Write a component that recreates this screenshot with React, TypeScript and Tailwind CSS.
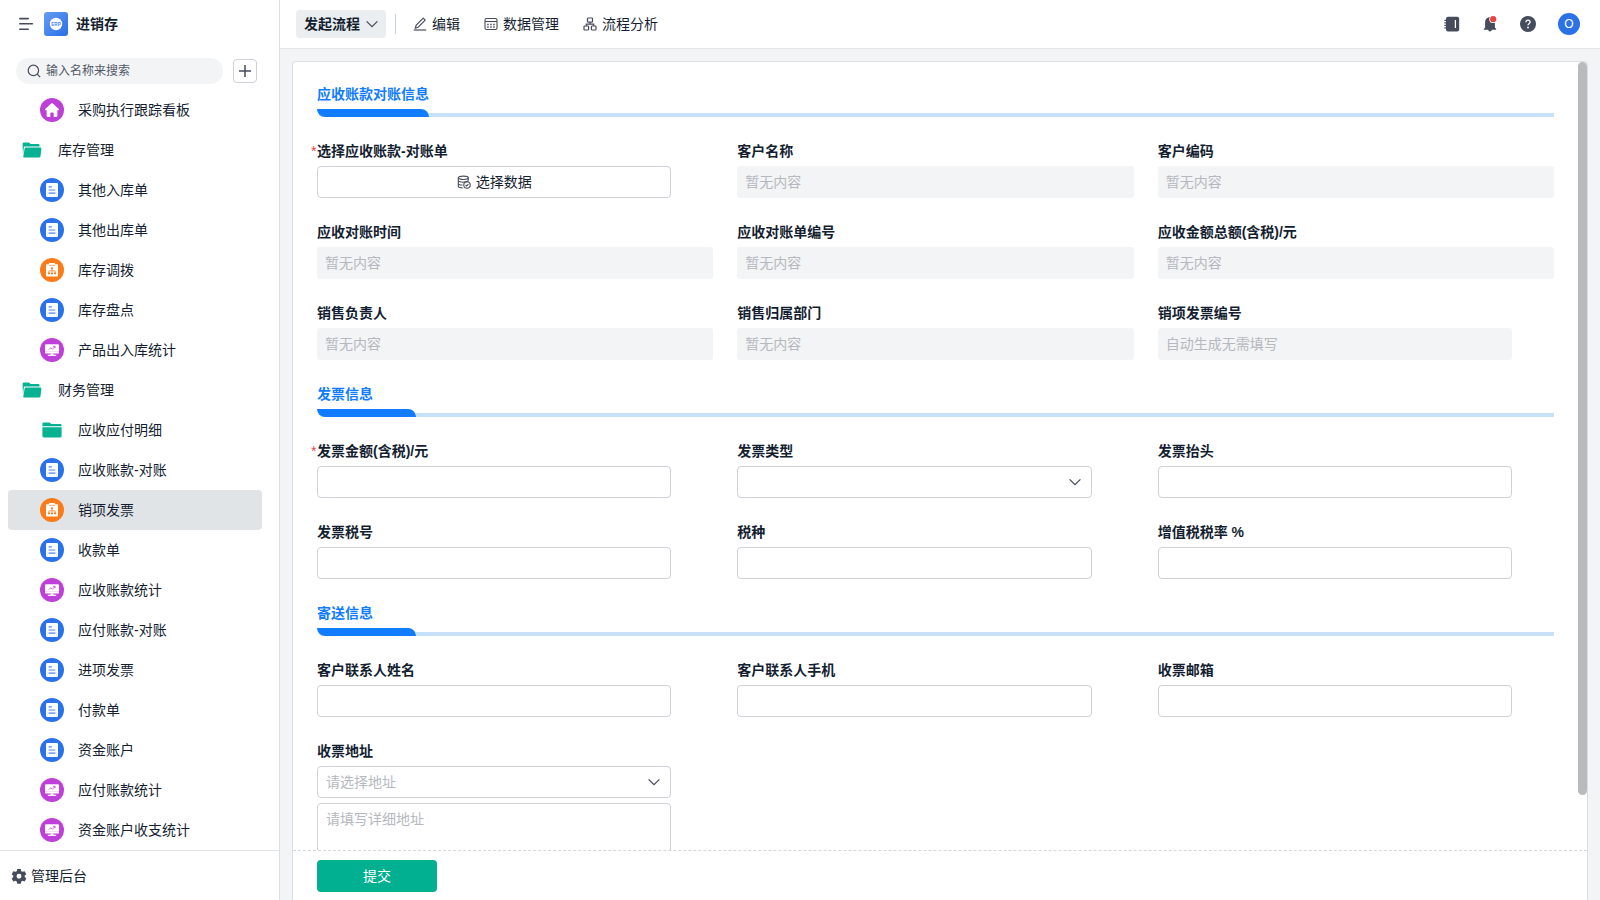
import { FormEvent, ReactNode, useState } from 'react';
import clsx from 'clsx';

type IconKind = 'home' | 'form' | 'flow' | 'chart' | 'folder' | 'folderOpen';

interface IMenuItem {
  name: string;
  icon: IconKind;
  group?: boolean;
}

interface IField {
  id: string;
  label: string;
  kind: 'pick' | 'readonly' | 'auto' | 'text' | 'select' | 'address';
  required?: boolean;
}

interface ISection {
  title: string;
  fields: IField[];
}

const menu: IMenuItem[] = [
  { name: '采购执行跟踪看板', icon: 'home' },
  { name: '库存管理', icon: 'folderOpen', group: true },
  { name: '其他入库单', icon: 'form' },
  { name: '其他出库单', icon: 'form' },
  { name: '库存调拨', icon: 'flow' },
  { name: '库存盘点', icon: 'form' },
  { name: '产品出入库统计', icon: 'chart' },
  { name: '财务管理', icon: 'folderOpen', group: true },
  { name: '应收应付明细', icon: 'folder' },
  { name: '应收账款-对账', icon: 'form' },
  { name: '销项发票', icon: 'flow' },
  { name: '收款单', icon: 'form' },
  { name: '应收账款统计', icon: 'chart' },
  { name: '应付账款-对账', icon: 'form' },
  { name: '进项发票', icon: 'form' },
  { name: '付款单', icon: 'form' },
  { name: '资金账户', icon: 'form' },
  { name: '应付账款统计', icon: 'chart' },
  { name: '资金账户收支统计', icon: 'chart' },
];

const sections: ISection[] = [
  {
    title: '应收账款对账信息',
    fields: [
      { id: 'statement', label: '选择应收账款-对账单', kind: 'pick', required: true },
      { id: 'customer', label: '客户名称', kind: 'readonly' },
      { id: 'customerCode', label: '客户编码', kind: 'readonly' },
      { id: 'statementDate', label: '应收对账时间', kind: 'readonly' },
      { id: 'statementNo', label: '应收对账单编号', kind: 'readonly' },
      { id: 'total', label: '应收金额总额(含税)/元', kind: 'readonly' },
      { id: 'owner', label: '销售负责人', kind: 'readonly' },
      { id: 'department', label: '销售归属部门', kind: 'readonly' },
      { id: 'invoiceNo', label: '销项发票编号', kind: 'auto' },
    ],
  },
  {
    title: '发票信息',
    fields: [
      { id: 'amount', label: '发票金额(含税)/元', kind: 'text', required: true },
      { id: 'type', label: '发票类型', kind: 'select' },
      { id: 'header', label: '发票抬头', kind: 'text' },
      { id: 'taxNo', label: '发票税号', kind: 'text' },
      { id: 'taxKind', label: '税种', kind: 'text' },
      { id: 'rate', label: '增值税税率 %', kind: 'text' },
    ],
  },
  {
    title: '寄送信息',
    fields: [
      { id: 'contact', label: '客户联系人姓名', kind: 'text' },
      { id: 'phone', label: '客户联系人手机', kind: 'text' },
      { id: 'email', label: '收票邮箱', kind: 'text' },
      { id: 'address', label: '收票地址', kind: 'address' },
    ],
  },
];

function Circle({ color, children }: { color: string; children: ReactNode }) {
  return (
    <svg viewBox="0 0 24 24" className="size-6">
      <circle cx="12" cy="12" r="12" fill={color} />
      {children}
    </svg>
  );
}

function MenuIcon({ icon }: { icon: IconKind }) {
  switch (icon) {
    case 'home':
      return (
        <Circle color="#bf3fd9">
          <path
            fill="#fff"
            d="M12 5.2c.3 0 .6.1.8.3l6 5.6c.5.5.2 1.2-.5 1.2h-.9v5.5c0 .7-.5 1.2-1.2 1.2h-2.5v-3.6c0-.5-.3-.8-.8-.8h-1.8c-.5 0-.8.3-.8.8V19H7.8c-.7 0-1.2-.5-1.2-1.2v-5.5h-.9c-.7 0-1-.7-.5-1.2l6-5.6c.2-.2.5-.3.8-.3z"
          />
        </Circle>
      );
    case 'form':
      return (
        <Circle color="#2b71e8">
          <rect x="6" y="5" width="12" height="14" rx="1.2" fill="#fff" />
          <path
            d="M8.6 8.8h3.2M8.6 12h6.8M8.6 15.2h6.8"
            stroke="#4a86ec"
            strokeWidth="1.2"
          />
        </Circle>
      );
    case 'flow':
      return (
        <Circle color="#fa7b19">
          <path
            fill="#fff"
            d="M7.2 6.2h1.6v-.4c0-.4.3-.7.7-.7h5c.4 0 .7.3.7.7v.4h1.6c.7 0 1.2.5 1.2 1.2v10c0 .7-.5 1.2-1.2 1.2H7.2c-.7 0-1.2-.5-1.2-1.2v-10c0-.7.5-1.2 1.2-1.2z"
          />
          <path d="M9 7.4h6" stroke="#fa7b19" strokeWidth=".6" />
          <path
            d="M12 10.6v4M8.9 15v-2.2h6.2V15"
            fill="none"
            stroke="#fa7b19"
            strokeWidth=".7"
          />
          <path
            fill="#fa7b19"
            d="M11 9.4h2v1.8h-2zM8 14.4h2v1.8H8zM11 14.4h2v1.8h-2zM14 14.4h2v1.8h-2z"
          />
        </Circle>
      );
    case 'chart':
      return (
        <Circle color="#bf3fd9">
          <rect x="5" y="6.2" width="14" height="9.4" rx="1.2" fill="#fff" />
          <path fill="#fff" d="M10.5 15.5h3v1.2h2.7v1.2H7.8v-1.2h2.7z" />
          <path
            d="M8.8 11.8l1.9-1.9 1.7 1.4 2.5-2.7M13.2 8.4H15v1.8"
            fill="none"
            stroke="#bf3fd9"
            strokeWidth=".8"
          />
          <path d="M5 13.5h14" stroke="#e9bff2" strokeWidth=".5" />
        </Circle>
      );
    case 'folder':
      return (
        <svg viewBox="0 0 24 24" className="size-6">
          <path
            fill="#07b292"
            d="M2.4 5.8c0-.8.6-1.4 1.4-1.4h5.4c.4 0 .7.2 1 .5l1 1.1h9c.8 0 1.4.6 1.4 1.4v.8H2.4z"
          />
          <path
            fill="#07b292"
            d="M2.4 9.2h19.2v8.8c0 .8-.6 1.4-1.4 1.4H3.8c-.8 0-1.4-.6-1.4-1.4z"
          />
        </svg>
      );
    case 'folderOpen':
      return (
        <svg viewBox="0 0 24 24" className="size-6">
          <path
            fill="#07b292"
            d="M2.6 5.9c0-.8.6-1.4 1.4-1.4h4.6c.4 0 .8.2 1 .5l1 1.1h7.6c.8 0 1.4.6 1.4 1.4v1.1H5.2c-.8 0-1.3.5-1.4 1.2L2.9 17z"
          />
          <path
            fill="#07b292"
            d="M5.9 9.4h14.4c.7 0 1.2.6 1.1 1.3l-.9 7.6c-.1.7-.6 1.2-1.3 1.2H4.2c-.6 0-1-.5-.9-1.1l1.3-7.9c.1-.6.6-1.1 1.3-1.1z"
          />
        </svg>
      );
  }
}

function Chevron({ className }: { className?: string }) {
  return (
    <svg
      viewBox="0 0 14 14"
      className={clsx('size-3.5', className)}
      fill="none"
      stroke="#464c5b"
      strokeWidth="1.3"
    >
      <path d="M1.6 4.4L7 9.6l5.4-5.2" />
    </svg>
  );
}

function Sidebar() {
  const [active, setActive] = useState('销项发票');

  return (
    <aside className="flex w-[280px] shrink-0 flex-col border-r border-[#dcdfe2] bg-white">
      <div className="flex h-12 shrink-0 items-center pl-[18px]">
        <button type="button" aria-label="收起菜单">
          <svg
            viewBox="0 0 16 16"
            className="size-4"
            fill="none"
            stroke="#464c5b"
            strokeWidth="1.6"
            strokeLinecap="round"
          >
            <path d="M1.8 2.6h8.4M1.8 7.8h12.6M1.8 13.2h8.4" />
          </svg>
        </button>
        <svg viewBox="0 0 24 24" className="ml-2.5 size-6">
          <defs>
            <linearGradient id="logo" x1="0" y1="0" x2="1" y2="1">
              <stop offset="0" stopColor="#659df5" />
              <stop offset="1" stopColor="#2b6fe6" />
            </linearGradient>
          </defs>
          <rect width="24" height="24" rx="3" fill="url(#logo)" />
          <circle cx="12" cy="12" r="6.2" fill="#fff" />
          <text
            x="12"
            y="13.7"
            fontSize="4.6"
            fontWeight="700"
            textAnchor="middle"
            fill="#4a86ee"
          >
            ERP
          </text>
        </svg>
        <span className="ml-2 text-sm font-semibold">进销存</span>
      </div>

      <div className="flex shrink-0 items-center pt-2.5 pr-[22px] pb-1.5 pl-4">
        <label className="flex h-[26px] min-w-0 flex-1 items-center gap-1 rounded-full bg-[#f2f4f5] px-2.5">
          <svg
            viewBox="0 0 16 16"
            className="size-4 shrink-0"
            fill="none"
            stroke="#464c5b"
            strokeWidth="1.2"
          >
            <circle cx="7.4" cy="7.4" r="5.2" />
            <path d="M11.2 11.2l3 3" />
          </svg>
          <input
            type="text"
            aria-label="搜索"
            placeholder="输入名称来搜索"
            className="w-full min-w-0 bg-transparent text-xs outline-none placeholder:text-[#525967]"
          />
        </label>
        <button
          type="button"
          aria-label="新建"
          className="ml-2.5 flex size-6 items-center justify-center rounded border border-[#ced1d5]"
        >
          <svg
            viewBox="0 0 14 14"
            className="size-3.5 shrink-0"
            stroke="#464c5b"
            strokeWidth="1.5"
          >
            <path d="M7 1v12M1 7h12" />
          </svg>
        </button>
      </div>

      <nav className="min-h-0 flex-1 overflow-hidden pr-[17px] pl-2">
        {menu.map((item) => (
          <a
            key={item.name}
            href="#"
            onClick={() => setActive(item.name)}
            className={clsx(
              'flex h-10 items-center gap-3.5 rounded text-sm',
              item.group ? 'pl-3' : 'pl-8',
              active === item.name && 'bg-[#e1e4e6]',
            )}
          >
            <MenuIcon icon={item.icon} />
            {item.name}
          </a>
        ))}
      </nav>

      <a
        href="#"
        className="flex h-[50px] shrink-0 items-center gap-1 border-t border-[#e1e4e6] pl-[11px] text-sm"
      >
        <svg viewBox="0 0 24 24" className="size-4" fill="#464c5b">
          <path
            fillRule="evenodd"
            d="M9.3 1.5h5.4l.7 3.2 1.8 1 3.2-1 2.6 4.5-2.4 2.2v2.1l2.4 2.2-2.6 4.5-3.2-1-1.8 1-.7 3.3H9.3l-.7-3.3-1.8-1-3.2 1L1 15.7l2.4-2.2v-2.1L1 9.2l2.6-4.5 3.2 1 1.8-1zM12 8.700a3.700 3.700 0 1 0 0 7.400 3.700 3.700 0 0 0 0-7.400z"
          />
        </svg>
        管理后台
      </a>
    </aside>
  );
}

function TopBar() {
  return (
    <header className="flex h-[49px] shrink-0 items-center border-b border-[#e4e6e8] bg-white pr-5 pl-4">
      <button
        type="button"
        className="flex h-7 items-center gap-[5px] rounded bg-[#ebeef0] pr-[7px] pl-2 text-sm font-semibold"
      >
        发起流程
        <Chevron />
      </button>
      <span className="mr-[17px] ml-[9px] h-5 w-px bg-[#ced1d5]" />

      <div className="flex items-center gap-6 text-sm">
        <button type="button" className="flex items-center gap-[5px]">
          <svg
            viewBox="0 0 14 14"
            className="size-3.5"
            fill="none"
            stroke="#464c5b"
            strokeWidth="1.2"
          >
            <path
              d="M10.2 1.2l2 2-7 7-3 1 1-3z"
              strokeLinejoin="round"
            />
            <path d="M.8 13h12.4" />
          </svg>
          编辑
        </button>
        <button type="button" className="flex items-center gap-[5px]">
          <svg
            viewBox="0 0 14 14"
            className="size-3.5"
            fill="none"
            stroke="#464c5b"
            strokeWidth="1.1"
          >
            <rect x="1" y="1.5" width="12" height="11" rx="1.5" />
            <path d="M1 4.5h12" />
            <path
              d="M3.2 7.500h1.500M6.200 7.500h1.500M9.200 7.500h1.500M3.200 10h1.500M6.200 10h1.500M9.200 10h1.500"
              strokeWidth="1.3"
            />
          </svg>
          数据管理
        </button>
        <button type="button" className="flex items-center gap-[5px]">
          <svg
            viewBox="0 0 14 14"
            className="size-3.5"
            fill="none"
            stroke="#464c5b"
            strokeWidth="1.2"
          >
            <rect x="4.5" y="1" width="5" height="4.2" rx=".8" />
            <rect x="1" y="9" width="4.600" height="4" rx=".8" />
            <rect x="8.4" y="9" width="4.600" height="4" rx=".8" />
            <path d="M7 5.200v1.900M3.300 9V7.100h7.400V9" />
          </svg>
          流程分析
        </button>
      </div>

      <div className="ml-auto flex items-center gap-[22px]">
        <button type="button" aria-label="通讯录">
          <svg viewBox="0 0 16 16" className="size-4">
            <rect x="2" y=".8" width="13.2" height="14.6" rx="2" fill="#464c5b" />
            <path
              d="M.4 4.4h2.6M.4 6.900h2.600M.4 9.400h2.600M.4 11.900h2.600"
              stroke="#464c5b"
              strokeWidth="1.1"
            />
            <path d="M11.4 4v8" stroke="#fff" strokeWidth="1.200" />
          </svg>
        </button>
        <button type="button" aria-label="消息">
          <svg viewBox="0 0 16 16" className="size-4">
            <path
              fill="#464c5b"
              d="M8 1.200c3 0 4.900 2.200 4.900 5v5.200l1.300 1.700v.7h-4.400a1.800 1.800 0 0 1-3.600 0H1.800v-.7l1.300-1.700V6.200c0-2.800 1.900-5 4.900-5z"
            />
            <circle cx="11.2" cy="3.2" r="3.9" fill="#fff" />
            <circle cx="11.2" cy="3.2" r="3.1" fill="#e64545" />
          </svg>
        </button>
        <button type="button" aria-label="帮助">
          <svg viewBox="0 0 16 16" className="size-4" fill="none">
            <circle cx="8" cy="8" r="8" fill="#464c5b" />
            <path
              d="M5.900 6.200c0-1.300.9-2.100 2.100-2.100s2.100.8 2.100 2c0 1.500-2.100 1.600-2.100 3.200"
              stroke="#fff"
              strokeWidth="1.3"
            />
            <circle cx="8" cy="11.5" r=".9" fill="#fff" />
          </svg>
        </button>
        <button
          type="button"
          className="flex size-[22px] items-center justify-center rounded-full bg-[#2b71e8] text-xs text-white"
        >
          O
        </button>
      </div>
    </header>
  );
}

const inputClass =
  'block h-8 w-full rounded border border-[#ced1d5] bg-white px-2 text-sm outline-none';

function FieldControl({ field }: { field: IField }) {
  const { id, kind } = field;

  if (kind === 'readonly' || kind === 'auto') {
    return (
      <input
        id={id}
        readOnly
        placeholder={kind === 'auto' ? '自动生成无需填写' : '暂无内容'}
        className="block h-8 w-full rounded-[3px] bg-[#f2f4f5] px-2 text-sm outline-none placeholder:text-[#b5b8be]"
      />
    );
  }

  if (kind === 'pick') {
    return (
      <button
        id={id}
        type="button"
        className="flex h-8 w-full items-center justify-center gap-[5px] rounded border border-[#ced1d5] text-sm"
      >
        <svg
          viewBox="0 0 14 14"
          className="size-3.5"
          fill="none"
          stroke="#464c5b"
          strokeWidth="1.1"
        >
          <ellipse cx="6.300" cy="2.800" rx="5" ry="1.700" />
          <path d="M1.300 2.800v8.400c0 .9 1.800 1.600 4.200 1.700M11.300 2.800v2.800M1.300 5.600c0 .9 2.200 1.600 5 1.600M1.300 8.400c0 .9 1.800 1.600 4.200 1.600M6.300 7.200c1.600 0 3.200-.3 5-1.500" />
          <circle cx="10" cy="10" r="3.2" />
          <path d="M8.600 10l1 1 1.800-1.800" />
        </svg>
        选择数据
      </button>
    );
  }

  if (kind === 'select' || kind === 'address') {
    return (
      <>
        <div className="relative">
          <select
            id={id}
            defaultValue=""
            className={clsx(inputClass, 'appearance-none text-[#b5b8be]')}
          >
            <option value="">{kind === 'address' ? '请选择地址' : ''}</option>
          </select>
          <Chevron className="pointer-events-none absolute top-[9px] right-2.5" />
        </div>
        {kind === 'address' && (
          <textarea
            aria-label="详细地址"
            placeholder="请填写详细地址"
            className="mt-[5px] block h-20 w-full resize-none rounded border border-[#ced1d5] px-2 py-[5px] text-sm outline-none placeholder:text-[#b5b8be]"
          />
        )}
      </>
    );
  }

  return <input id={id} type="text" className={inputClass} />;
}

function FormField({ field }: { field: IField }) {
  return (
    <div className={clsx('min-w-0', field.kind !== 'readonly' && 'pr-[42px]')}>
      <label
        htmlFor={field.id}
        className="relative mb-[5px] block h-5 text-sm leading-5 font-semibold"
      >
        {field.required && (
          <span className="absolute -left-1.5 font-normal text-[#e64545]">*</span>
        )}
        {field.label}
      </label>
      <FieldControl field={field} />
    </div>
  );
}

export default function App() {
  function handleSubmit(event: FormEvent) {
    event.preventDefault();
  }

  return (
    <div className="flex h-screen overflow-hidden bg-[#f3f4f6] font-['Liberation_Sans','Noto_Sans_CJK_SC',sans-serif] text-[#141e31]">
      <Sidebar />
      <main className="flex min-w-0 flex-1 flex-col">
        <TopBar />
        <form
          onSubmit={handleSubmit}
          className="mx-3 mt-3 flex min-h-0 flex-1 flex-col rounded-t border border-b-0 border-[#dcdfe2] bg-white"
        >
          <div className="relative min-h-0 flex-1">
            <div className="flex h-full flex-col gap-6 overflow-hidden pt-[22px] pr-[33px] pl-6">
              {sections.map((section) => (
                <section key={section.title} className="flex shrink-0 flex-col gap-6">
                  <div>
                    <h2 className="mb-[5px] h-5 text-sm leading-5 font-semibold text-[#117cff]">
                      {section.title}
                    </h2>
                    <div className="flex h-2 items-end">
                      <div className="h-2 min-w-[8%] rounded-tr-lg rounded-bl-lg bg-[#117cff]">
                        {/* keeps the bar as wide as its title */}
                        <span className="invisible block h-0 overflow-hidden text-sm">
                          {section.title}
                        </span>
                      </div>
                      <div className="h-1 flex-1 bg-[#c7e1f8]" />
                    </div>
                  </div>
                  <div className="grid grid-cols-3 gap-6">
                    {section.fields.map((field) => (
                      <FormField key={field.id} field={field} />
                    ))}
                  </div>
                </section>
              ))}
            </div>
            <div className="absolute top-0 right-0 h-[93%] w-[9px] rounded-full bg-[#b8babd]" />
          </div>
          <div className="flex h-[50px] shrink-0 items-center border-t border-dashed border-[#d5d8db] pl-6">
            <button
              type="submit"
              className="h-8 w-[120px] rounded bg-[#00b090] text-sm text-white"
            >
              提交
            </button>
          </div>
        </form>
      </main>
    </div>
  );
}
